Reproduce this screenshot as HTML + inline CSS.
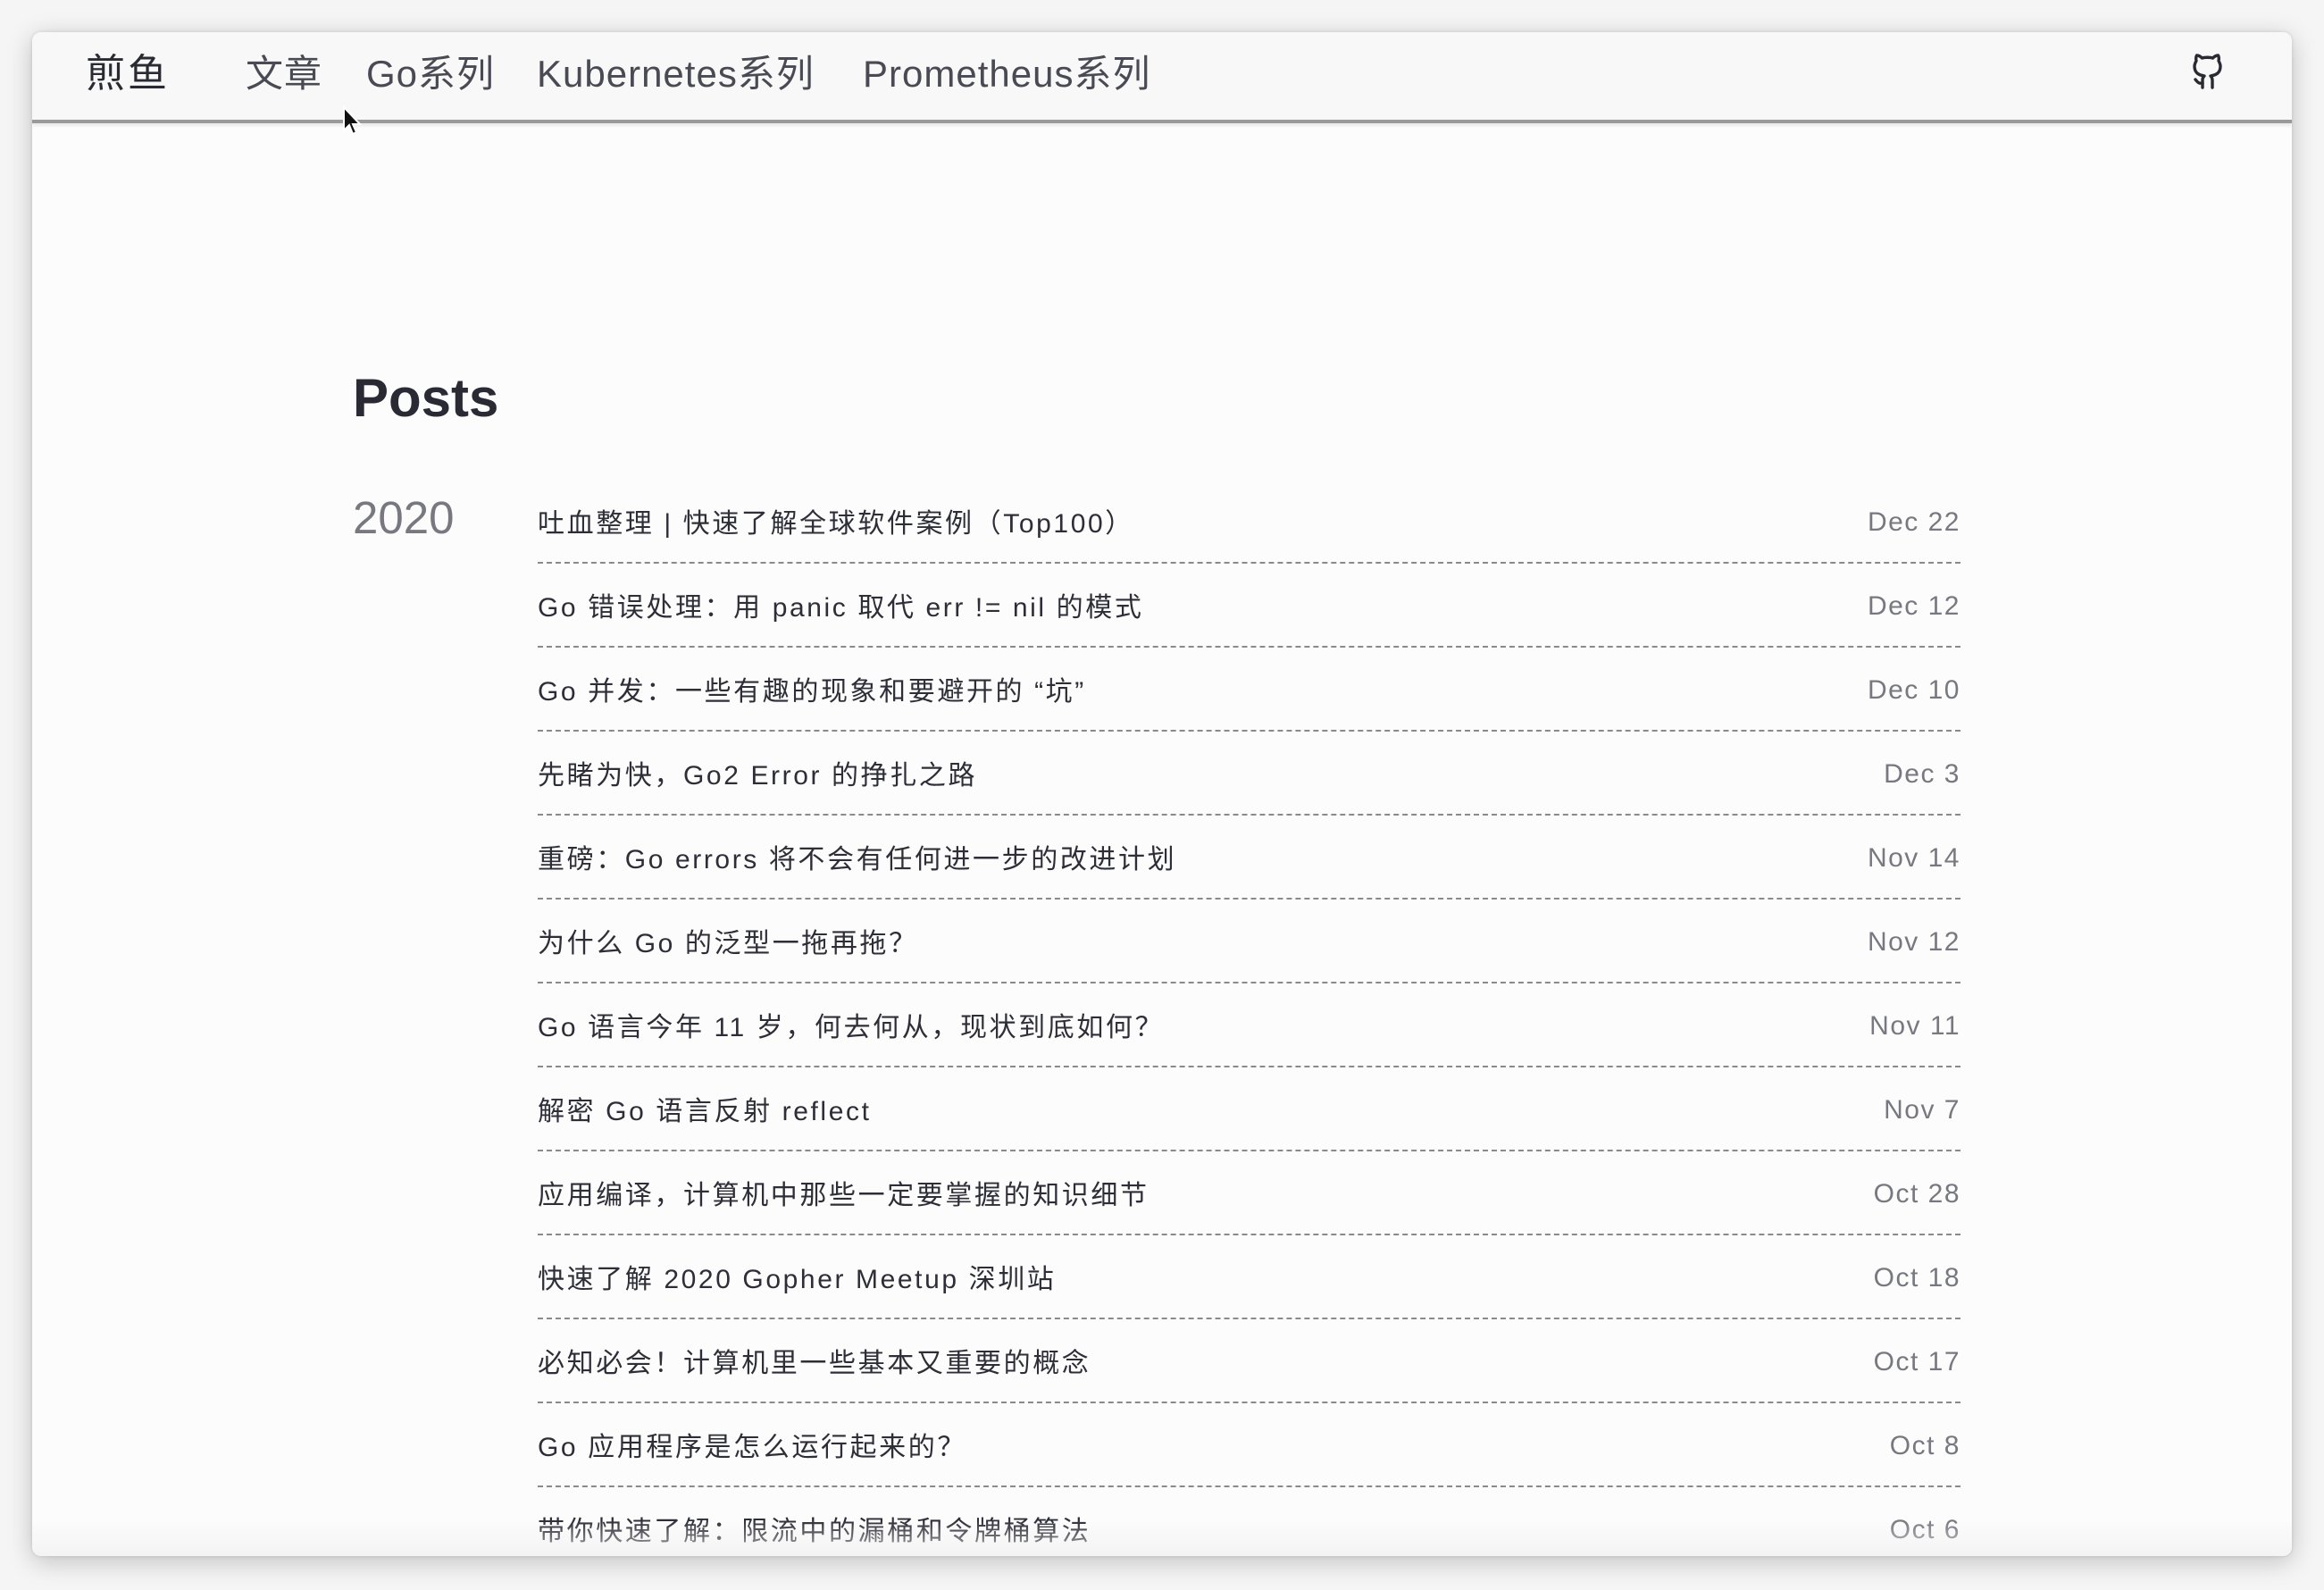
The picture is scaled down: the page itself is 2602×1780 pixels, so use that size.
<!DOCTYPE html>
<html><head><meta charset="utf-8">
<style>
html,body{margin:0;padding:0;width:2602px;height:1780px;overflow:hidden;background:#f5f5f5;}
body{font-family:"Liberation Sans","Noto Sans CJK SC",sans-serif;position:relative;}
.win{position:absolute;left:36px;top:36px;width:2530px;height:1706px;background:#fcfcfc;border-radius:10px;overflow:hidden;box-shadow:0 6px 28px rgba(0,0,0,0.22),0 0 4px rgba(0,0,0,0.12);}
.nav{position:absolute;left:0;top:0;width:100%;height:98px;background:#f8f8f8;border-bottom:4px solid #9a9a9a;box-shadow:0 3px 3px rgba(0,0,0,0.08);}
.nav span{position:absolute;top:22px;font-size:42px;line-height:50px;color:#4a4a55;letter-spacing:1px;}
.nav .logo{color:#2a2a33;font-size:44px;letter-spacing:3px;}
.posts{position:absolute;left:359px;top:370px;font-size:60px;font-weight:bold;color:#2a2a35;line-height:80px;}
.year{position:absolute;left:359px;top:509px;font-size:51px;color:#777880;line-height:70px;}
.list{position:absolute;left:566px;top:501px;width:1593px;}
.row{height:92px;border-bottom:2px dashed #8a8a8a;display:flex;justify-content:space-between;align-items:center;font-size:30px;letter-spacing:2.6px;color:#2e2e38;}
.row .d{color:#777880;letter-spacing:1.5px;padding-top:4px;}
.fade{position:absolute;left:0;bottom:0;width:100%;height:40px;background:linear-gradient(rgba(252,252,252,0),rgba(240,240,240,0.7));}
</style></head><body>
<div class="win">
  <div class="nav">
    <span class="logo" style="left:60px">煎鱼</span>
    <span style="left:239px">文章</span>
    <span style="left:374px">Go系列</span>
    <span style="left:565px">Kubernetes系列</span>
    <span style="left:930px">Prometheus系列</span>
    <svg style="position:absolute;left:2414px;top:20px" width="44" height="46" viewBox="0 0 44 46" fill="none" stroke="#2a2a33" stroke-width="3.4" stroke-linecap="round" stroke-linejoin="round">
      <path d="M16 42V33c0-2 1-3 2-4-6-1-11-3-11-11 0-2 1-4 2-6-0.5-2-0.5-4 0.5-6 2 0 4 1 6 3 3-1 9-1 12 0 2-2 4-3 6-3 1 2 1 4 0.5 6 1 2 2 4 2 6 0 8-5 10-11 11 1 1 2 3 2 5v8"/>
      <path d="M16 37c-5 1-6-2-8-4"/>
    </svg>
  </div>
  <div class="posts">Posts</div>
  <div class="year">2020</div>
  <div class="list">
    <div class="row"><span>吐血整理 | 快速了解全球软件案例（Top100）</span><span class="d">Dec 22</span></div>
    <div class="row"><span>Go 错误处理：用 panic 取代 err != nil 的模式</span><span class="d">Dec 12</span></div>
    <div class="row"><span>Go 并发：一些有趣的现象和要避开的 “坑”</span><span class="d">Dec 10</span></div>
    <div class="row"><span>先睹为快，Go2 Error 的挣扎之路</span><span class="d">Dec 3</span></div>
    <div class="row"><span>重磅：Go errors 将不会有任何进一步的改进计划</span><span class="d">Nov 14</span></div>
    <div class="row"><span>为什么 Go 的泛型一拖再拖？</span><span class="d">Nov 12</span></div>
    <div class="row"><span>Go 语言今年 11 岁，何去何从，现状到底如何？</span><span class="d">Nov 11</span></div>
    <div class="row"><span>解密 Go 语言反射 reflect</span><span class="d">Nov 7</span></div>
    <div class="row"><span>应用编译，计算机中那些一定要掌握的知识细节</span><span class="d">Oct 28</span></div>
    <div class="row"><span>快速了解 2020 Gopher Meetup 深圳站</span><span class="d">Oct 18</span></div>
    <div class="row"><span>必知必会！计算机里一些基本又重要的概念</span><span class="d">Oct 17</span></div>
    <div class="row"><span>Go 应用程序是怎么运行起来的？</span><span class="d">Oct 8</span></div>
    <div class="row"><span>带你快速了解：限流中的漏桶和令牌桶算法</span><span class="d">Oct 6</span></div>
  </div>
  <div class="fade"></div>
</div>
<svg style="position:absolute;left:383px;top:118px" width="22" height="34" viewBox="0 0 22 34">
  <path d="M2 2v26l6-6 4 10 4-2-4-9h8z" fill="#111" stroke="#fff" stroke-width="2"/>
</svg>
</body></html>
